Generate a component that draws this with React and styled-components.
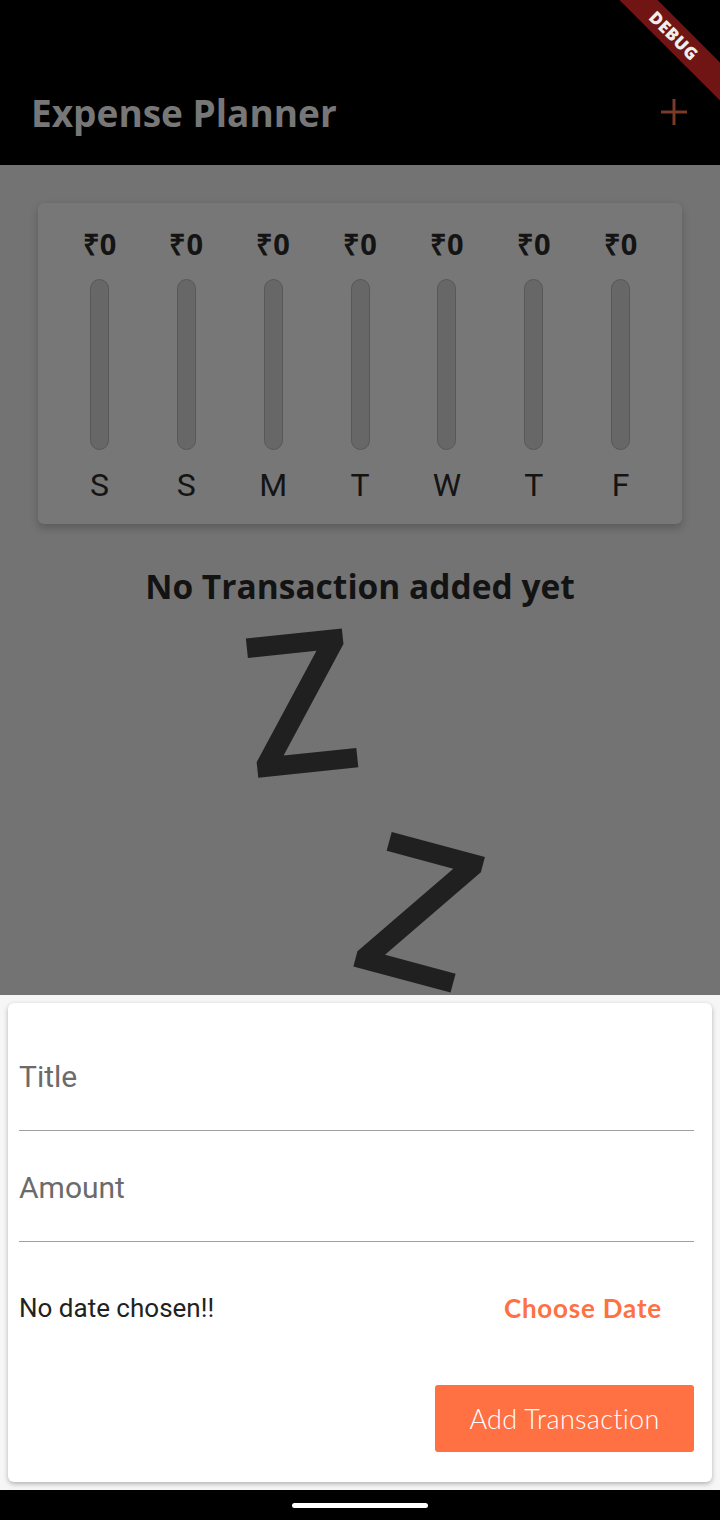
import React from "react";
import styled, { createGlobalStyle } from "styled-components";

const GlobalStyle = createGlobalStyle`
  html, body {
    margin: 0;
    padding: 0;
    background: #000;
  }
  * {
    box-sizing: border-box;
  }
`;

const Screen = styled.div`
  position: relative;
  width: 720px;
  height: 1520px;
  display: flex;
  flex-direction: column;
  overflow: hidden;
  background: #000;
`;

const AppBar = styled.header`
  height: 165px;
  flex-shrink: 0;
  background: #000;
  padding-top: 70px;
`;

const AppBarRow = styled.div`
  height: 84px;
  display: flex;
  align-items: center;
  justify-content: space-between;
  padding: 0 31px 0 31px;
`;

const AppTitle = styled.h1`
  margin: 0;
  font-family: "Open Sans", sans-serif;
  font-weight: 700;
  font-size: 37px;
  color: #777;
`;

const AddIcon = styled.svg`
  width: 30px;
  height: 30px;
  display: block;
`;

const Body = styled.main`
  height: 830px;
  flex-shrink: 0;
  background: #737373;
  overflow: hidden;
  display: flex;
  flex-direction: column;
  align-items: center;
  padding-top: 38px;
`;

const ChartCard = styled.section`
  width: 644px;
  height: 321px;
  flex-shrink: 0;
  background: #777;
  border-radius: 6px;
  box-shadow: 0 4px 8px rgba(0, 0, 0, 0.22);
  display: flex;
  padding: 0 18px;
`;

const DayColumn = styled.div`
  flex: 1;
  display: flex;
  flex-direction: column;
  align-items: center;
  padding-top: 24px;
`;

const Amount = styled.div`
  font-family: "Open Sans", sans-serif;
  font-weight: 700;
  font-size: 29px;
  line-height: 33px;
  color: #141414;
`;

const BarTrack = styled.div`
  margin-top: 19px;
  width: 19px;
  height: 171px;
  border-radius: 10px;
  background: #676767;
  border: 1.5px solid #585858;
  overflow: hidden;
  display: flex;
  align-items: flex-end;
`;

const BarFill = styled.div`
  width: 100%;
  background: #7a3a26;
`;

const DayLabel = styled.div`
  margin-top: 16px;
  font-family: Roboto, sans-serif;
  font-size: 32px;
  line-height: 38px;
  color: #141414;
`;

const EmptyTitle = styled.h2`
  margin: 39px 0 0;
  font-family: "Open Sans", sans-serif;
  font-weight: 700;
  font-size: 33.5px;
  line-height: 46px;
  color: #131313;
`;

const SleepArt = styled.svg`
  display: block;
  flex-shrink: 0;
  overflow: visible;
`;

const Sheet = styled.div`
  height: 495px;
  flex-shrink: 0;
  background: #f6f6f6;
  padding: 8px;
`;

const FormCard = styled.form`
  height: 479px;
  background: #fff;
  border-radius: 6px;
  box-shadow: 0 2px 5px rgba(0, 0, 0, 0.28);
  padding: 0 18px 0 11px;
  display: flex;
  flex-direction: column;
`;

const Field = styled.label`
  display: flex;
  align-items: center;
  height: ${(p) => p.height}px;
  padding-top: ${(p) => p.top}px;
  border-bottom: 1.5px solid #a0a0a0;
  font-family: Roboto, sans-serif;
  font-size: 30px;
  color: #6b6b6b;
`;

const DateRow = styled.div`
  display: flex;
  align-items: center;
  justify-content: space-between;
  height: 132px;
  padding-right: 32px;
`;

const DateText = styled.span`
  font-family: Roboto, sans-serif;
  font-size: 26px;
  color: #222;
`;

const TextButton = styled.button`
  border: none;
  background: none;
  padding: 0;
  font-family: Lato, sans-serif;
  font-weight: 700;
  font-size: 26px;
  letter-spacing: 0.8px;
  color: #ff7043;
`;

const Actions = styled.div`
  display: flex;
  justify-content: flex-end;
  margin-top: 11px;
`;

const SubmitButton = styled.button`
  width: 259px;
  height: 67px;
  border: none;
  border-radius: 3px;
  background: #ff7043;
  color: #fff;
  font-family: Lato, sans-serif;
  font-weight: 300;
  font-size: 27px;
  letter-spacing: 0.3px;
`;

const NavBar = styled.div`
  flex: 1;
  background: #000;
  display: flex;
  justify-content: center;
  padding-top: 13px;
`;

const NavHandle = styled.div`
  width: 136px;
  height: 5px;
  border-radius: 3px;
  background: #fff;
`;

const DebugRibbon = styled.div`
  position: absolute;
  top: 22px;
  right: -44px;
  width: 180px;
  height: 27px;
  background: #711414;
  transform: rotate(45deg);
  display: flex;
  align-items: center;
  justify-content: center;
  font-family: "Open Sans", sans-serif;
  font-weight: 800;
  font-size: 17px;
  color: #eee;
  letter-spacing: 0.5px;
`;

const days = ["S", "S", "M", "T", "W", "T", "F"];

const App = () => {
  return (
    <>
      <GlobalStyle />
      <Screen>
        <AppBar>
          <AppBarRow>
            <AppTitle>Expense Planner</AppTitle>
            <AddIcon viewBox="0 0 30 30">
              <path d="M15 2v26M2 15h26" stroke="#7a3a26" strokeWidth="3" fill="none" />
            </AddIcon>
          </AppBarRow>
        </AppBar>
        <Body>
          <ChartCard>
            {days.map((d, i) => (
              <DayColumn key={i}>
                <Amount>₹0</Amount>
                <BarTrack>
                  <BarFill style={{ height: "0%" }} />
                </BarTrack>
                <DayLabel>{d}</DayLabel>
              </DayColumn>
            ))}
          </ChartCard>
          <EmptyTitle>No Transaction added yet</EmptyTitle>
          <SleepArt width="320" height="400" viewBox="0 0 320 400">
            <text
              x="101"
              y="164"
              textAnchor="middle"
              fontFamily="Open Sans, sans-serif"
              fontWeight="600"
              fontSize="196"
              fill="#202020"
              transform="rotate(-6 101 94)"
            >
              Z
            </text>
            <text
              x="220"
              y="373"
              textAnchor="middle"
              fontFamily="Open Sans, sans-serif"
              fontWeight="600"
              fontSize="196"
              fill="#202020"
              transform="rotate(15 220 303)"
            >
              Z
            </text>
          </SleepArt>
        </Body>
        <Sheet>
          <FormCard>
            <Field height={128} top={20}>Title</Field>
            <Field height={111} top={2}>Amount</Field>
            <DateRow>
              <DateText>No date chosen!!</DateText>
              <TextButton type="button">Choose Date</TextButton>
            </DateRow>
            <Actions>
              <SubmitButton type="button">Add Transaction</SubmitButton>
            </Actions>
          </FormCard>
        </Sheet>
        <NavBar>
          <NavHandle />
        </NavBar>
        <DebugRibbon>DEBUG</DebugRibbon>
      </Screen>
    </>
  );
};

export default App;
